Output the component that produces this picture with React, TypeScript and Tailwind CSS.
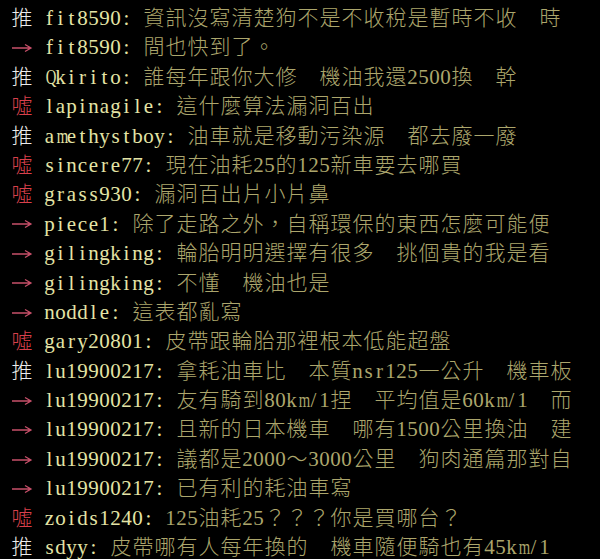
import React from 'react'

type Tag = 'push' | 'boo' | 'arrow'

const rows: [Tag, string, string][] = [
  ['push', 'fit8590', '資訊沒寫清楚狗不是不收稅是暫時不收  時'],
  ['arrow', 'fit8590', '間也快到了。'],
  ['push', 'Qkirito', '誰每年跟你大修  機油我還2500換  幹'],
  ['boo', 'lapinagile', '這什麼算法漏洞百出'],
  ['push', 'amethystboy', '油車就是移動污染源  都去廢一廢'],
  ['boo', 'sincere77', '現在油耗25的125新車要去哪買'],
  ['boo', 'grass930', '漏洞百出片小片鼻'],
  ['arrow', 'piece1', '除了走路之外，自稱環保的東西怎麼可能便'],
  ['arrow', 'gilingking', '輪胎明明選擇有很多  挑個貴的我是看'],
  ['arrow', 'gilingking', '不懂  機油也是'],
  ['arrow', 'noddle', '這表都亂寫'],
  ['boo', 'gary20801', '皮帶跟輪胎那裡根本低能超盤'],
  ['push', 'lu19900217', '拿耗油車比  本質nsr125一公升  機車板'],
  ['arrow', 'lu19900217', '友有騎到80km/1捏  平均值是60km/1  而'],
  ['arrow', 'lu19900217', '且新的日本機車  哪有1500公里換油  建'],
  ['arrow', 'lu19900217', '議都是2000～3000公里  狗肉通篇那對自'],
  ['arrow', 'lu19900217', '已有利的耗油車寫'],
  ['boo', 'zoids1240', '125油耗25？？？你是買哪台？'],
  ['push', 'sdyy', '皮帶哪有人每年換的  機車隨便騎也有45km/1'],
]

// one terminal cell per half-width char, two per full-width
function Cells({ text }: { text: string }) {
  return (
    <>
      {Array.from(text).map((c, i) => {
        if (c.charCodeAt(0) > 255) {
          return (
            <span key={i} className="inline-block w-[22px] text-center text-[21px] font-light font-['Noto_Sans_CJK_TC',sans-serif]">
              {c}
            </span>
          )
        }
        let cls = "inline-block w-[11px] text-center text-[21px] font-['Liberation_Serif',serif]"
        if (c === 'm' || c === 'w') cls = "inline-block w-[11px] text-center text-[21px] font-['Liberation_Serif',serif] scale-x-[0.7]"
        else if (c >= 'A' && c <= 'Z') cls = "inline-block w-[11px] text-center text-[21px] font-['Liberation_Serif',serif] scale-x-[0.7]"
        return (
          <span key={i} className={cls}>
            {c === ' ' ? '\u00a0' : c}
          </span>
        )
      })}
    </>
  )
}

function TagCell({ tag }: { tag: Tag }) {
  if (tag === 'arrow') {
    return (
      <span className="inline-block w-[22px] align-middle">
        <svg width="22" height="12" viewBox="0 0 22 12" className="block -translate-y-[2px]">
          <path d="M1 6 H20 M14 2.5 L20 6 L14 9.5" fill="none" stroke="#c8506a" strokeWidth="1.3" />
        </svg>
      </span>
    )
  }
  return (
    <span
      className={
        tag === 'push'
          ? "inline-block w-[22px] text-center text-[21px] font-light text-[#ececec] font-['Noto_Sans_CJK_TC',sans-serif]"
          : "inline-block w-[22px] text-center text-[21px] font-light text-[#d8404c] font-['Noto_Sans_CJK_TC',sans-serif]"
      }
    >
      {tag === 'push' ? '推' : '噓'}
    </span>
  )
}

export default function App() {
  return (
    <div className="w-[600px] h-[559px] bg-black overflow-hidden pt-[2px]">
      {rows.map(([tag, user, text], i) => (
        <div key={i} className="h-[29.4px] leading-[29.4px] whitespace-pre pl-[11px]">
          <TagCell tag={tag} />
          <span className="inline-block w-[11px]" />
          <span className="text-[#e4e4a6]">
            <Cells text={user + ':'} />
          </span>
          <span className="inline-block w-[11px]" />
          <span className="text-[#aca66c]">
            <Cells text={text} />
          </span>
        </div>
      ))}
    </div>
  )
}
